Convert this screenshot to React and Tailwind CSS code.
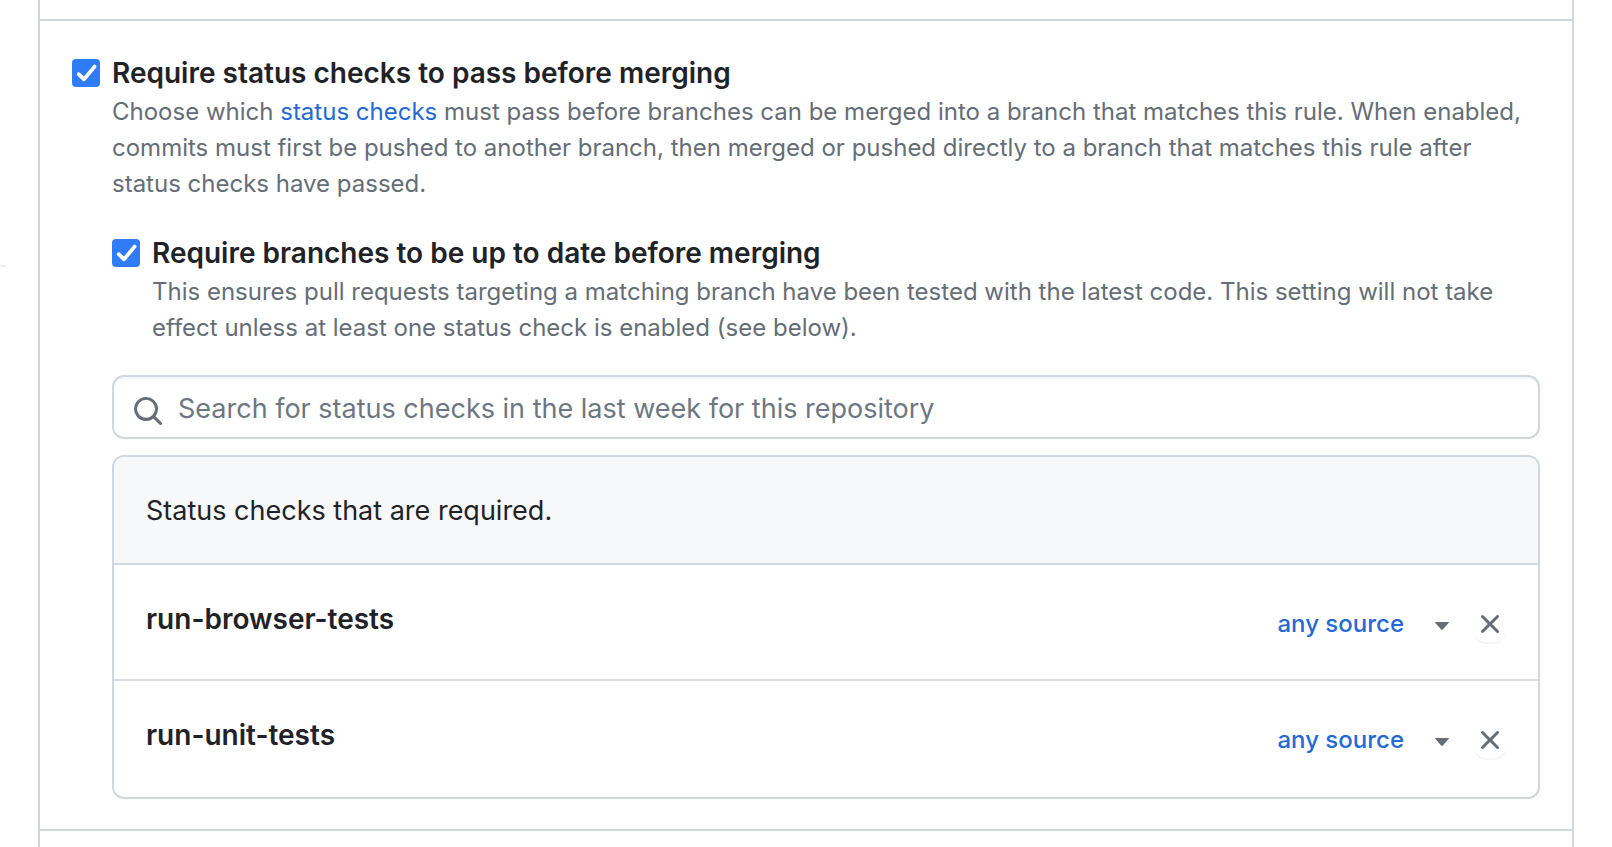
import { useState } from "react";

function CheckMark() {
  return (
    <svg viewBox="0 0 28 28" className="pointer-events-none col-start-1 row-start-1 size-7" fill="none" aria-hidden="true">
      <path d="M6.7 15.2 12 20.3 22.6 7.6" stroke="#fff" strokeWidth="3.8" strokeLinecap="round" strokeLinejoin="round" />
    </svg>
  );
}

function SearchIcon() {
  return (
    <svg viewBox="0 0 16 16" className="size-8" fill="currentColor" aria-hidden="true">
      <path d="M10.68 11.74a6 6 0 0 1-7.922-8.982 6 6 0 0 1 8.982 7.922l3.04 3.04a.749.749 0 0 1-.326 1.275.749.749 0 0 1-.734-.215ZM11.5 7a4.499 4.499 0 1 0-8.997 0A4.499 4.499 0 0 0 11.5 7Z" />
    </svg>
  );
}

function CloseIcon() {
  return (
    <svg viewBox="0 0 16 16" className="size-8" fill="currentColor" aria-hidden="true">
      <path d="M3.72 3.72a.75.75 0 0 1 1.06 0L8 6.94l3.22-3.22a.749.749 0 0 1 1.275.326.749.749 0 0 1-.215.734L9.06 8l3.22 3.22a.749.749 0 0 1-.326 1.275.749.749 0 0 1-.734-.215L8 9.06l-3.22 3.22a.751.751 0 0 1-1.042-.018.751.751 0 0 1-.018-1.042L6.94 8 3.72 4.78a.75.75 0 0 1 0-1.06Z" />
    </svg>
  );
}

function Option({ id, title, description, children }) {
  const [checked, setChecked] = useState(true);
  return (
    <div className="flex gap-3">
      <span className="mt-[7px] grid size-7 shrink-0">
        <input
          id={id}
          type="checkbox"
          checked={checked}
          onChange={(e) => setChecked(e.target.checked)}
          className="col-start-1 row-start-1 size-7 appearance-none rounded-[4px] border-2 border-[#767676] checked:border-0 checked:bg-[#2f7cf6]"
        />
        {checked && <CheckMark />}
      </span>
      <div className="min-w-0 flex-1">
        <label htmlFor={id} className="block text-[28px] leading-[42px] font-semibold">
          {title}
        </label>
        <p className="text-2xl leading-9 text-[#656d76]">{description}</p>
        {children}
      </div>
    </div>
  );
}

function CheckRow({ name }) {
  return (
    <li className="flex h-[116px] items-center justify-between border-t-2 border-[#d8dee4] px-8 first:border-[#d0d7de]">
      <strong className="pb-1.5 text-[28px] leading-[42px] font-semibold">{name}</strong>
      <div className="flex items-center gap-[25px] pt-1">
        <span className="relative flex items-center">
          <select
            aria-label={`Source for ${name}`}
            className="[field-sizing:content] appearance-none bg-transparent pr-[45px] text-2xl leading-9 font-medium text-[#2469d6]"
          >
            <option>any source</option>
          </select>
          <svg viewBox="0 0 14 8" className="pointer-events-none absolute right-0 mt-1 h-2 w-3.5" fill="#656d76" aria-hidden="true">
            <path d="M.5 0h13c.5 0 .6.4.3.7L7.8 7.5c-.5.5-1.1.5-1.6 0L.2.7C-.1.4 0 0 .5 0Z" />
          </svg>
        </span>
        <button
          type="button"
          aria-label={`Remove ${name}`}
          className="flex h-9 w-8 items-center justify-center rounded-xl text-[#656d76] shadow-[0_2px_0_rgba(31,35,40,0.04)]"
        >
          <CloseIcon />
        </button>
      </div>
    </li>
  );
}

export default function App() {
  return (
    <div className="flex min-h-screen bg-white pr-[38px] font-['Inter','Liberation_Sans',sans-serif] text-[#1f2328]">
      <aside className="w-[38px] shrink-0 pt-[265px]">
        <div className="h-0.5 w-1.5 bg-[#eaeef2]" />
      </aside>
      <main className="min-w-0 flex-1 border-x-2 border-[#d0d7de] pt-[19px]">
        <section className="border-y-2 border-[#d0d7de] px-8 pt-[31px] pb-[30px]">
          <Option
            id="require-status-checks"
            title="Require status checks to pass before merging"
            description={
              <>
                Choose which{" "}
                <a href="#status-checks" className="text-[#2469d6]">
                  status checks
                </a>{" "}
                must pass before branches can be merged into a branch that matches this rule. When enabled, commits must
                first be pushed to another branch, then merged or pushed directly to a branch that matches this rule after
                status checks have passed.
              </>
            }
          >
            <div className="mt-[30px]">
              <Option
                id="require-up-to-date"
                title="Require branches to be up to date before merging"
                description="This ensures pull requests targeting a matching branch have been tested with the latest code. This setting will not take effect unless at least one status check is enabled (see below)."
              />
            </div>
            <div className="relative mt-[29px] text-[#656d76]">
              <span className="pointer-events-none absolute top-5 left-5">
                <SearchIcon />
              </span>
              <input
                type="search"
                aria-label="Search for status checks"
                placeholder="Search for status checks in the last week for this repository"
                className="block h-16 w-full rounded-xl border-2 border-[#d0d7de] pt-0.5 pr-6 pl-16 text-[27px] text-[#1f2328] shadow-[inset_0_2px_0_rgba(208,215,222,0.2)] placeholder:text-[#6e7781]"
              />
            </div>
            <div className="mt-4 overflow-hidden rounded-xl border-2 border-[#d0d7de] pb-0.5">
              <h3 className="bg-[#f6f8fa] px-8 pt-[33px] pb-[31px] text-[27px] leading-[42px]">
                Status checks that are required.
              </h3>
              <ul>
                <CheckRow name="run-browser-tests" />
                <CheckRow name="run-unit-tests" />
              </ul>
            </div>
          </Option>
        </section>
      </main>
    </div>
  );
}
